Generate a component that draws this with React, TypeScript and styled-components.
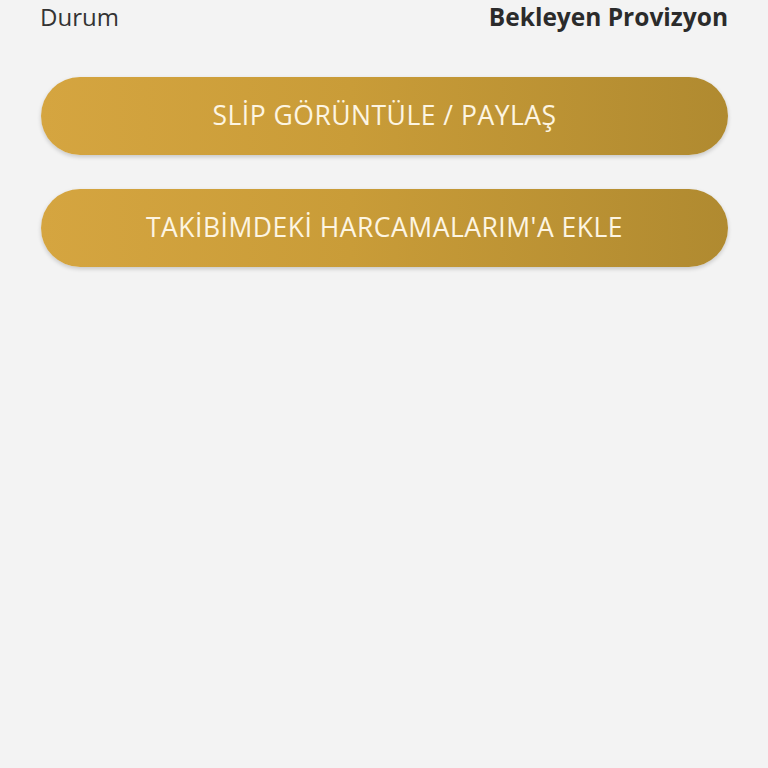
import styled, { createGlobalStyle } from 'styled-components';

const GlobalStyle = createGlobalStyle`
  html, body {
    margin: 0;
    padding: 0;
    background-color: #f3f3f3;
  }
  body {
    font-family: 'Open Sans', 'Noto Sans', 'Liberation Sans', sans-serif;
  }
`;

const Page = styled.div`
  min-height: 768px;
  padding: 0 40px 0 41px;
  background-color: #f3f3f3;
  box-sizing: border-box;
`;

const InfoRow = styled.div`
  display: flex;
  justify-content: space-between;
  align-items: center;
  height: 34px;
  line-height: 34px;
  color: #2d2d2d;
  font-size: 24px;
`;

const InfoLabel = styled.span`
  font-weight: 400;
  color: #333333;
  margin-left: -1px;
`;

const InfoValue = styled.span`
  font-weight: 700;
  color: #2b2b2b;
  font-size: 24.5px;
`;

const Actions = styled.div`
  display: flex;
  flex-direction: column;
  gap: 34px;
  margin-top: 43px;
`;

const GoldButton = styled.button`
  display: flex;
  align-items: center;
  justify-content: center;
  width: 100%;
  height: 78px;
  padding: 0 0 2px;
  border: none;
  border-radius: 39px;
  background: linear-gradient(90deg, #d5a540 0%, #c99c38 45%, #b08a30 100%);
  box-shadow: 0 2px 4px rgba(0, 0, 0, 0.18);
  color: #fdf5e2;
  font-family: 'Open Sans', 'Noto Sans', 'Liberation Sans', sans-serif;
  font-size: 26.5px;
  font-weight: 400;
  letter-spacing: 0.5px;
  cursor: pointer;
`;

export default function App() {
  return (
    <>
      <GlobalStyle />
      <Page>
        <InfoRow>
          <InfoLabel>Durum</InfoLabel>
          <InfoValue>Bekleyen Provizyon</InfoValue>
        </InfoRow>
        <Actions>
          <GoldButton>SLİP GÖRÜNTÜLE / PAYLAŞ</GoldButton>
          <GoldButton>TAKİBİMDEKİ HARCAMALARIM'A EKLE</GoldButton>
        </Actions>
      </Page>
    </>
  );
}
